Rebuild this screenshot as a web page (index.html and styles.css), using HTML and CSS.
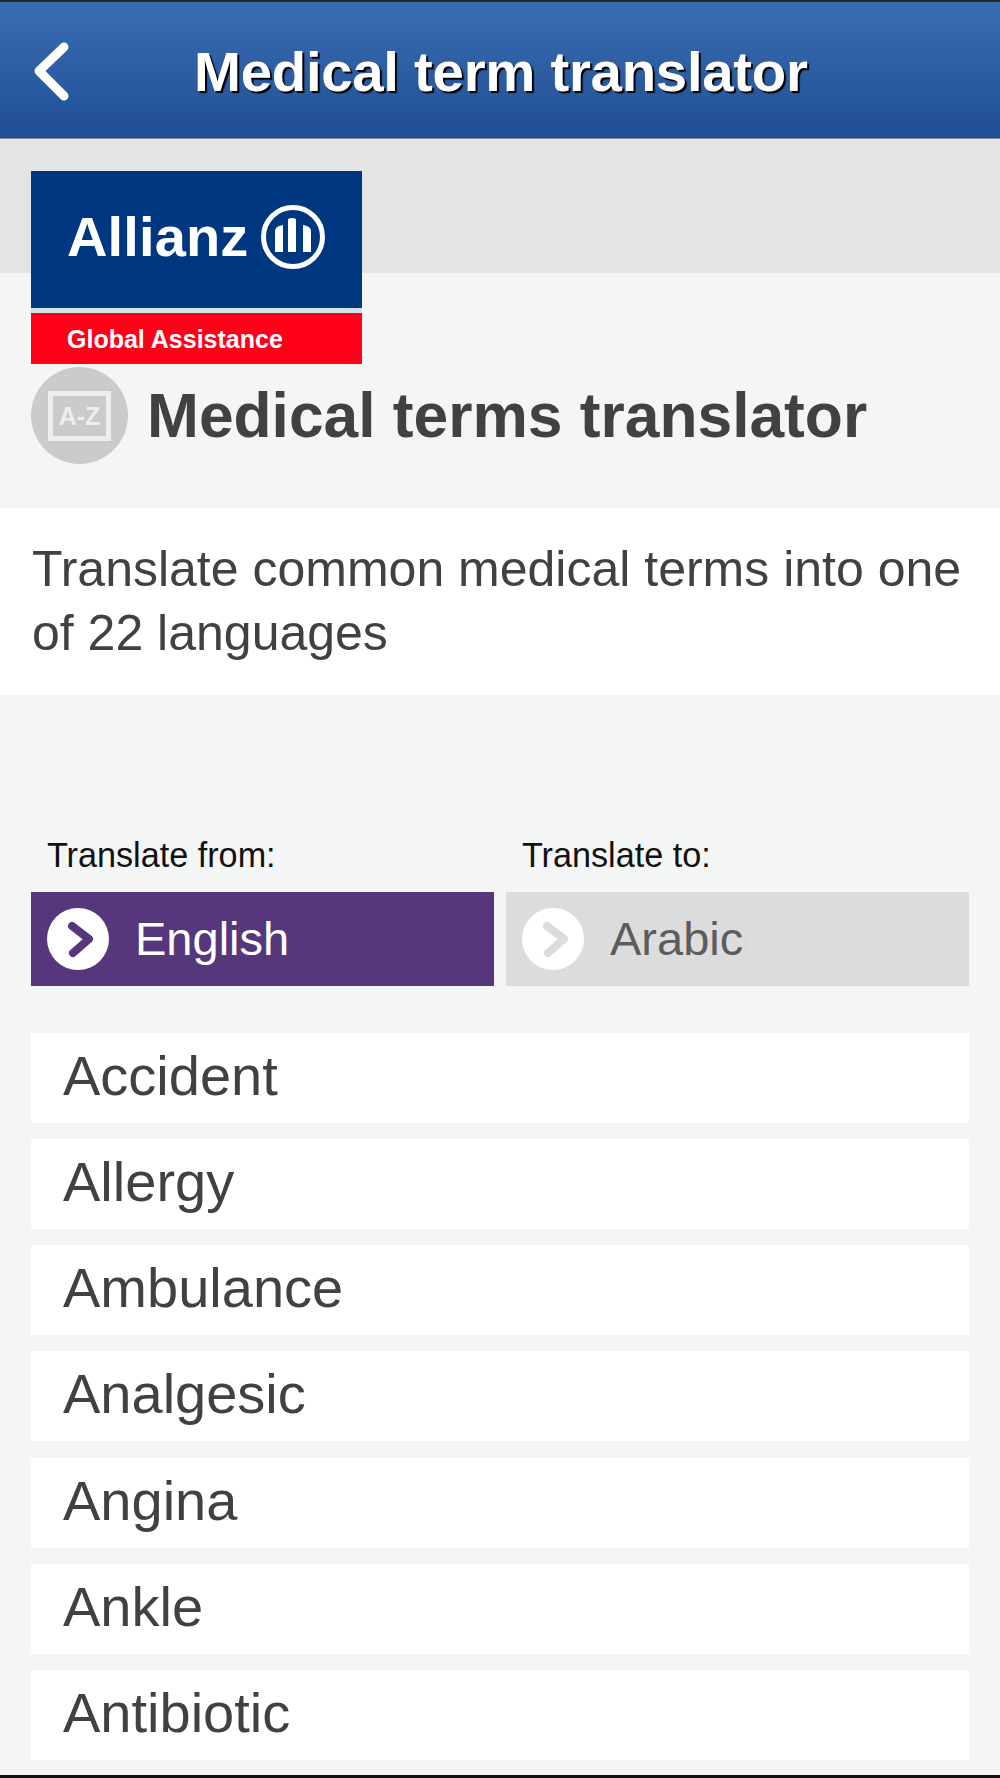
FILE: index.html
```html
<!DOCTYPE html>
<html lang="en">
<head>
<meta charset="utf-8">
<title>Medical term translator</title>
<link rel="stylesheet" href="styles.css">
</head>
<body>
<div class="page">
  <header class="topbar">
    <svg class="back" viewBox="0 0 40 62" aria-hidden="true"><path d="M32 7 L7 31 L32 56" /></svg>
    <h1 class="topbar-title">Medical term translator</h1>
  </header>
  <section class="hero">
    <div class="logo">
      <div class="logo-blue">
        <span class="logo-name">Allianz</span>
        <svg class="logo-mark" viewBox="0 0 66 66" aria-hidden="true">
          <circle class="ring" cx="33" cy="33" r="29.5"/>
          <path class="bar" d="M15 48 V27 Q15 24 19 22 L23 21 V48 Z"/>
          <path class="bar" d="M28 48 V15 Q32 13 36 15 V48 Z"/>
          <path class="bar" d="M43 48 V21 L47 22 Q51 24 51 27 V48 Z"/>
        </svg>
      </div>
      <div class="logo-red">Global Assistance</div>
    </div>
    <div class="hero-row">
      <div class="az-circle"><span class="az-box">A-Z</span></div>
      <h2 class="hero-title">Medical terms translator</h2>
    </div>
  </section>
  <p class="intro">Translate common medical terms into one of 22 languages</p>
  <section class="selectors">
    <div class="selector">
      <div class="selector-label">Translate from:</div>
      <div class="selector-btn active">
        <svg class="chev" viewBox="0 0 62 62" aria-hidden="true"><circle cx="31" cy="31" r="31"/><path d="M25 18 L42 31 L26 45"/></svg>
        <span class="selector-text">English</span>
      </div>
    </div>
    <div class="selector">
      <div class="selector-label">Translate to:</div>
      <div class="selector-btn">
        <svg class="chev" viewBox="0 0 62 62" aria-hidden="true"><circle cx="31" cy="31" r="31"/><path d="M25 18 L42 31 L26 45"/></svg>
        <span class="selector-text">Arabic</span>
      </div>
    </div>
  </section>
  <ul class="terms">
    <li>Accident</li>
    <li>Allergy</li>
    <li>Ambulance</li>
    <li>Analgesic</li>
    <li>Angina</li>
    <li>Ankle</li>
    <li>Antibiotic</li>
  </ul>
  <div class="endbar"></div>
</div>
</body>
</html>
```
FILE: styles.css
```css
* { box-sizing: border-box; }
html, body { margin: 0; padding: 0; }
body { background: #f4f6f5; font-family: "Liberation Sans", Arial, sans-serif; color: #414141; }
.page { width: 1000px; height: 1778px; overflow: hidden; display: flex; flex-direction: column; }

.topbar { height: 139px; flex: none; display: flex; align-items: center; border-top: 2px solid #23272e; border-bottom: 1px solid #7f8894; background: linear-gradient(#3b6db1, #1f4e95); padding-left: 32px; }
.back { width: 40px; height: 62px; flex: none; margin-top: 2px; }
.back path { fill: none; stroke: #fff; stroke-width: 9; stroke-linecap: round; stroke-linejoin: round; }
.topbar-title { margin: 2px 0 0 122px; font-size: 56.4px; font-weight: 700; letter-spacing: -0.3px; color: #fff; text-shadow: 2px 2px 1px #000; white-space: nowrap; }

.hero { flex: none; height: 369px; padding: 32px 31px 0; background: linear-gradient(#e4e4e4 134px, transparent 134px); }
.logo { width: 331px; height: 193px; display: flex; flex-direction: column; background: #cfe3ee; }
.logo-blue { height: 137px; background: #003781; display: flex; align-items: center; padding: 0 0 5px 36px; gap: 12px; color: #fff; }
.logo-name { font-size: 56px; font-weight: 700; line-height: 1; letter-spacing: 0.14px; filter: blur(0.6px); }
.logo-mark { width: 66px; height: 66px; flex: none; filter: blur(0.6px); }
.ring { fill: none; stroke: #fff; stroke-width: 5; }
.bar { fill: #fff; }
.logo-red { margin-top: 5px; height: 51px; background: #ff0019; color: #fff; font-size: 25px; font-weight: 700; line-height: 53px; padding-left: 36px; }
.hero-row { display: flex; align-items: center; margin-top: 3px; gap: 19px; }
.az-circle { width: 97px; height: 97px; border-radius: 50%; background: #cbcbcb; display: flex; align-items: center; justify-content: center; flex: none; filter: blur(0.5px); }
.az-box { width: 63px; height: 50px; border: 5px solid #eeeeee; color: #eeeeee; font-size: 25px; font-weight: 700; line-height: 40px; text-align: center; }
.hero-title { margin: 0; font-size: 62.3px; font-weight: 700; color: #414141; white-space: nowrap; }

.intro { margin: 0; flex: none; height: 187px; padding: 30px 32px 0; background: #fff; font-size: 50px; line-height: 63.5px; color: #414141; }

.selectors { flex: none; display: grid; grid-template-columns: 463px 463px; gap: 12px; padding: 0 31px; margin-top: 138px; }
.selector-label { padding-left: 16px; font-size: 34.2px; line-height: 44px; margin-bottom: 15px; color: #111; }
.selector-btn { height: 94px; display: flex; align-items: center; gap: 26px; padding-left: 16px; background: #dcdcdc; font-size: 47px; color: #5c5c5c; text-shadow: 26px 0 0 rgba(255,255,255,0.08); }
.selector-btn.active { background: #57377b; color: #fff; text-shadow: 26px 0 0 rgba(255,255,255,0.012); }
.selector-text { margin-top: -2px; }
.chev { width: 62px; height: 62px; flex: none; }
.chev circle { fill: #fff; }
.chev path { fill: none; stroke: #dcdcdc; stroke-width: 8; stroke-linecap: round; stroke-linejoin: round; }
.active .chev path { stroke: #57377b; }

.terms { list-style: none; margin: 47px 0 0; padding: 0 31px; flex: none; display: flex; flex-direction: column; gap: 16.17px; }
.terms li { height: 90px; background: #fff; padding-left: 32px; font-size: 56px; line-height: 85px; color: #414141; }
.endbar { margin-top: auto; height: 3px; flex: none; background: #111; }
```
